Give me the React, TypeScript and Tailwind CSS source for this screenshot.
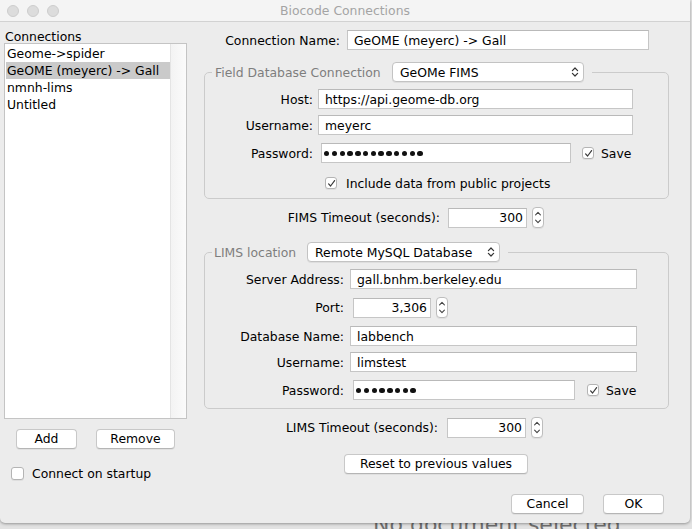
import React from "react";

function CheckMark() {
  return (
    <svg width="9" height="9" viewBox="0 0 9 9" fill="none">
      <path
        d="M1.6 4.9 L3.6 7 L7.6 1.6"
        stroke="#3a3a3a"
        strokeWidth="1.2"
        strokeLinecap="round"
        strokeLinejoin="round"
      />
    </svg>
  );
}

function Checkbox({ checked, className = "" }: { checked: boolean; className?: string }) {
  return (
    <div
      className={`flex shrink-0 items-center justify-center rounded-[3px] border border-[#b4b4b4] bg-white shadow-[0_1px_0_rgba(0,0,0,0.06)] ${className}`}
    >
      {checked && <CheckMark />}
    </div>
  );
}

function TextField({
  children,
  className = "",
  right = false,
}: {
  children?: React.ReactNode;
  className?: string;
  right?: boolean;
}) {
  return (
    <div
      className={`flex h-[20px] shrink-0 items-center border border-[#c6c6c6] border-t-[#b9b9b9] bg-white ${
        right ? "justify-end pr-[3px]" : "pl-[6px]"
      } ${className}`}
    >
      {children}
    </div>
  );
}

function Dots({ n }: { n: number }) {
  return (
    <div className="flex gap-[2.4px] pt-[1px]">
      {Array.from({ length: n }).map((_, i) => (
        <span key={i} className="h-[5.4px] w-[5.4px] rounded-full bg-[#111]" />
      ))}
    </div>
  );
}

function Spinner({ className = "" }: { className?: string }) {
  return (
    <div
      className={`h-[21px] shrink-0 rounded-[4px] border border-[#bdbdbd] bg-white shadow-[0_1px_0_rgba(0,0,0,0.05)] ${className}`}
    >
      <svg width="10" height="19" viewBox="0 0 10 19" fill="none">
        <path d="M2.6 6.8 L5 4.4 L7.4 6.8" stroke="#444" strokeWidth="1.1" strokeLinecap="round" strokeLinejoin="round" />
        <path d="M2.6 12.2 L5 14.6 L7.4 12.2" stroke="#444" strokeWidth="1.1" strokeLinecap="round" strokeLinejoin="round" />
      </svg>
    </div>
  );
}

function Popup({ label, className = "" }: { label: string; className?: string }) {
  return (
    <div
      className={`flex h-[20px] items-center justify-between rounded-[4px] border border-[#c3c3c3] bg-white pl-[7px] pr-[4px] shadow-[0_1px_0_rgba(0,0,0,0.06)] ${className}`}
    >
      <span>{label}</span>
      <svg width="8" height="12" viewBox="0 0 8 12" fill="none">
        <path d="M1.4 4.6 L4 2 L6.6 4.6" stroke="#333" strokeWidth="1.2" strokeLinecap="round" strokeLinejoin="round" />
        <path d="M1.4 7.4 L4 10 L6.6 7.4" stroke="#333" strokeWidth="1.2" strokeLinecap="round" strokeLinejoin="round" />
      </svg>
    </div>
  );
}

function Button({ children, className = "" }: { children: React.ReactNode; className?: string }) {
  return (
    <button
      type="button"
      className={`h-[20px] shrink-0 rounded-[4px] border border-[#c8c8c8] border-b-[#b5b5b5] bg-white text-center leading-[18px] shadow-[0_1px_0_rgba(0,0,0,0.05)] ${className}`}
    >
      {children}
    </button>
  );
}

function Label({ children, className = "" }: { children: React.ReactNode; className?: string }) {
  return <span className={`shrink-0 text-right ${className}`}>{children}</span>;
}

const connections = ["Geome->spider", "GeOME (meyerc) -> Gall", "nmnh-lims", "Untitled"];

export default function App() {
  return (
    <div className="relative h-[529px] w-[692px] overflow-hidden bg-[#e2e2e2] font-['DejaVu_Sans',sans-serif] text-[12.4px] leading-[15px] text-black">
      <div className="absolute left-[373px] top-[512px] text-[22px] leading-[26px] text-[#6f6f6f]">
        No document selected
      </div>

      <div className="relative z-10 flex h-[523px] w-[690px] flex-col rounded-b-[5px] bg-[#ececec] shadow-[0_1px_3px_rgba(0,0,0,0.35)]">
        {/* title bar */}
        <div className="relative flex h-[22px] shrink-0 items-center border-b border-[#d2d2d2] bg-[#f4f4f4]">
          <div className="ml-[7px] flex gap-[8px]">
            <span className="h-[12px] w-[12px] rounded-full border border-[#cdcdcd] bg-[#dcdcdc]" />
            <span className="h-[12px] w-[12px] rounded-full border border-[#cdcdcd] bg-[#dcdcdc]" />
            <span className="h-[12px] w-[12px] rounded-full border border-[#cdcdcd] bg-[#dcdcdc]" />
          </div>
          <div className="absolute inset-0 flex items-center justify-center text-[#a4a4a4]">
            Biocode Connections
          </div>
        </div>

        <div className="flex flex-1">
          {/* left column */}
          <div className="flex w-[200px] shrink-0 flex-col pl-[4px]">
            <div className="mt-[8px] h-[13px] pl-[1px] leading-[13px]">Connections</div>
            <div className="flex h-[376px] w-[183px] border border-[#c4c4c4] bg-white">
              <div className="flex-1 pl-[1px] pt-[1px]">
                {connections.map((c, i) => (
                  <div
                    key={c}
                    className={`h-[17px] whitespace-nowrap pl-[1px] leading-[17px] ${i === 1 ? "bg-[#cacaca]" : ""}`}
                  >
                    {c}
                  </div>
                ))}
              </div>
              <div className="w-[16px] border-l border-[#e4e4e4] bg-gradient-to-r from-[#f3f3f3] to-[#fbfbfb]" />
            </div>
            <div className="mt-[10px] flex">
              <Button className="ml-[12px] w-[61px]">Add</Button>
              <Button className="ml-[19px] w-[79px]">Remove</Button>
            </div>
            <div className="mt-[17px] flex items-center">
              <Checkbox checked={false} className="ml-[7px] h-[13px] w-[13px]" />
              <span className="ml-[8px]">Connect on startup</span>
            </div>
          </div>

          {/* right column */}
          <div className="flex flex-1 flex-col">
            <div className="mt-[8px] flex items-center">
              <Label className="w-[140px]">Connection Name:</Label>
              <TextField className="ml-[7px] w-[302px]">GeOME (meyerc) -&gt; Gall</TextField>
            </div>

            <fieldset className="ml-[4px] mt-[12px] w-[465px] rounded-[5px] border border-[#cbcbcb] pb-[5px] pt-[7px]">
              <legend className="ml-[7px] pr-[8px]">
                <div className="flex h-[20px] items-center pl-[3px]">
                  <span className="w-[177px] text-[#7e7e7e]">Field Database Connection</span>
                  <Popup label="GeOMe FIMS" className="w-[192px]" />
                </div>
              </legend>
              <div className="flex items-center">
                <Label className="w-[108px]">Host:</Label>
                <TextField className="ml-[5px] w-[315px]">https://api.geome-db.org</TextField>
              </div>
              <div className="mt-[6px] flex items-center">
                <Label className="w-[108px]">Username:</Label>
                <TextField className="ml-[5px] w-[315px]">meyerc</TextField>
              </div>
              <div className="mt-[8px] flex items-center">
                <Label className="w-[108px]">Password:</Label>
                <TextField className="ml-[8px] w-[250px] !pl-[2px]">
                  <Dots n={13} />
                </TextField>
                <Checkbox checked className="ml-[11px] h-[12px] w-[12px]" />
                <span className="ml-[7px]">Save</span>
              </div>
              <div className="mt-[10px] flex h-[20px] items-center">
                <Checkbox checked className="ml-[120px] h-[12px] w-[12px]" />
                <span className="ml-[9px]">Include data from public projects</span>
              </div>
            </fieldset>

            <div className="mt-[8px] flex items-center">
              <Label className="w-[240px]">FIMS Timeout (seconds):</Label>
              <TextField right className="ml-[8px] w-[79px]">300</TextField>
              <Spinner className="ml-[5px] w-[12px]" />
            </div>

            <fieldset className="ml-[4px] mt-[14px] w-[465px] rounded-[5px] border border-[#cbcbcb] pb-[8px] pt-[7px]">
              <legend className="ml-[7px] pr-[8px]">
                <div className="flex h-[20px] items-center pl-[2px]">
                  <span className="w-[93px] text-[#7e7e7e]">LIMS location</span>
                  <Popup label="Remote MySQL Database" className="w-[193px]" />
                </div>
              </legend>
              <div className="flex items-center">
                <Label className="w-[139px]">Server Address:</Label>
                <TextField className="ml-[6px] w-[287px]">gall.bnhm.berkeley.edu</TextField>
              </div>
              <div className="mt-[8px] flex items-center">
                <Label className="w-[139px]">Port:</Label>
                <TextField right className="ml-[9px] w-[78px]">3,306</TextField>
                <Spinner className="ml-[5px] w-[12px]" />
              </div>
              <div className="mt-[8px] flex items-center">
                <Label className="w-[139px]">Database Name:</Label>
                <TextField className="ml-[6px] w-[287px]">labbench</TextField>
              </div>
              <div className="mt-[6px] flex items-center">
                <Label className="w-[139px]">Username:</Label>
                <TextField className="ml-[6px] w-[287px]">limstest</TextField>
              </div>
              <div className="mt-[8px] flex items-center">
                <Label className="w-[139px]">Password:</Label>
                <TextField className="ml-[9px] w-[222px] !pl-[2px]">
                  <Dots n={8} />
                </TextField>
                <Checkbox checked className="ml-[12px] h-[12px] w-[12px]" />
                <span className="ml-[7px]">Save</span>
              </div>
            </fieldset>

            <div className="mt-[8px] flex items-center">
              <Label className="w-[238px]">LIMS Timeout (seconds):</Label>
              <TextField right className="ml-[9px] w-[79px]">300</TextField>
              <Spinner className="ml-[5px] w-[12px]" />
            </div>

            <div className="mt-[16px] flex">
              <Button className="ml-[144px] w-[184px]">Reset to previous values</Button>
            </div>

            <div className="mt-[20px] flex">
              <Button className="ml-[311px] w-[73px]">Cancel</Button>
              <Button className="ml-[19px] w-[61px]">OK</Button>
            </div>
          </div>
        </div>
      </div>
    </div>
  );
}
